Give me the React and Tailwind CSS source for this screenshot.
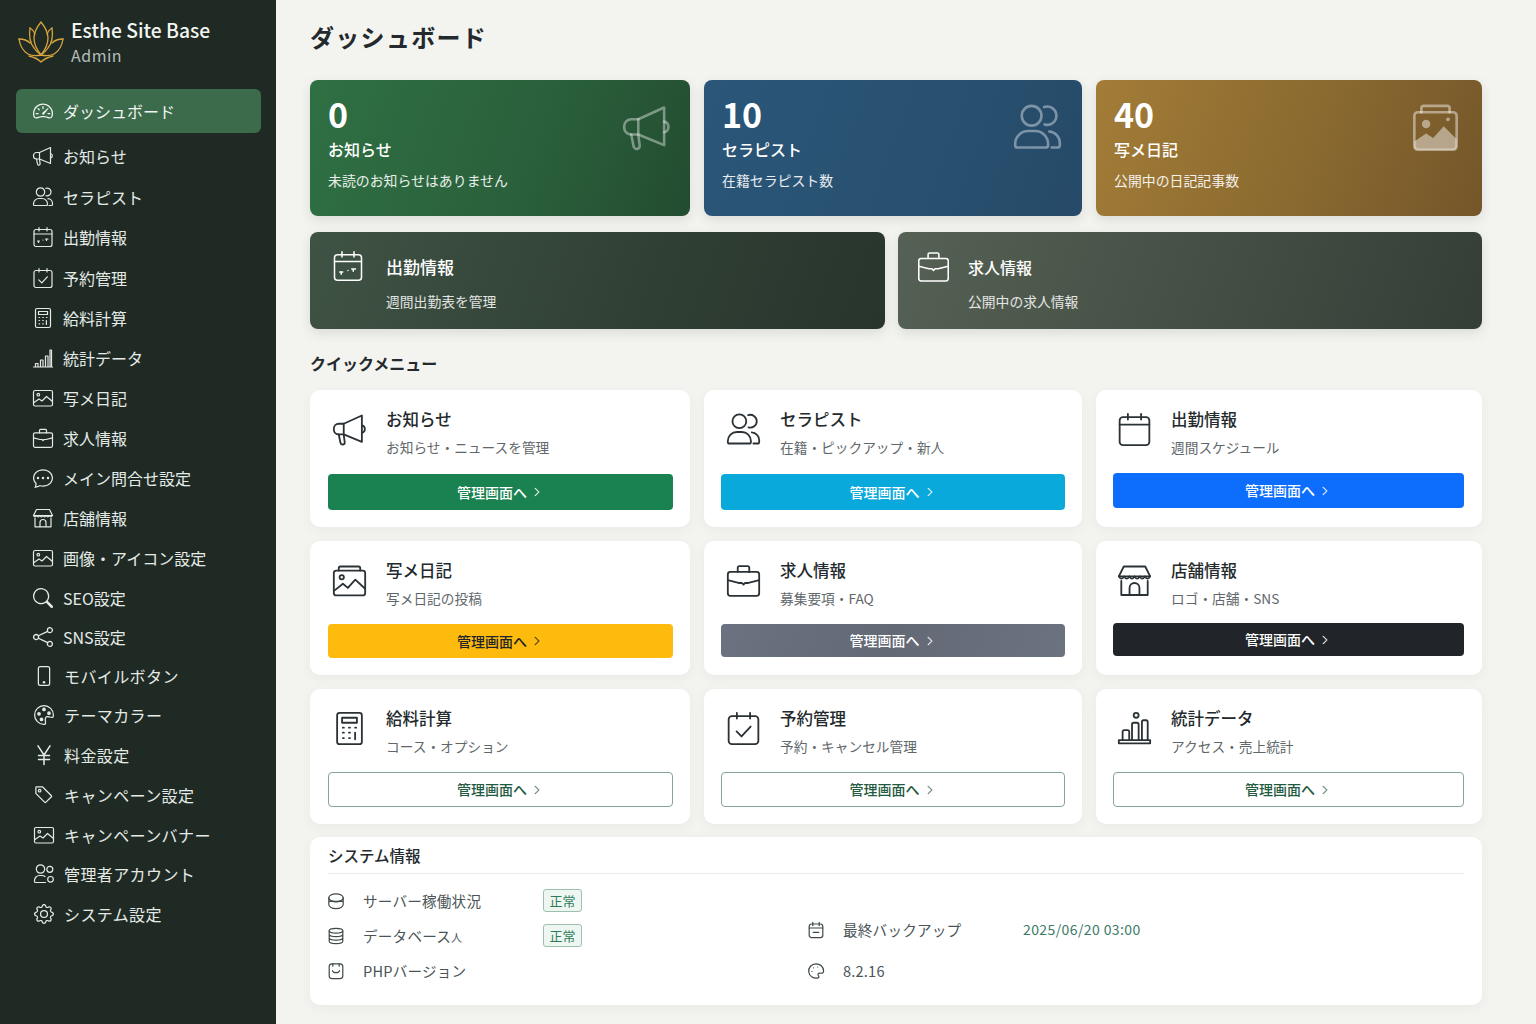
import React from "react";
import {
  BsSpeedometer2, BsChatDots, BsSearch, BsShare, BsPhone, BsPalette, BsTag, BsGear, BsChevronRight,
} from "react-icons/bs";

function S({ size = 20, sw = 1.2, children }) {
  return (
    <svg width={size} height={size} viewBox="2 2 20 20" fill="none" stroke="currentColor" strokeWidth={sw} strokeLinecap="round" strokeLinejoin="round" className="shrink-0 overflow-visible">
      {children}
    </svg>
  );
}

const Megaphone = (p) => (
  <S {...p}>
    <path d="M19.500 3.500 8.500 8.500H5.500A3 3 0 0 0 2.500 11.500v.5a3 3 0 0 0 3 3h3L19.500 19.500z" />
    <path d="M8.500 8.500V15M5.500 15l1 5a1.300 1.300 0 0 0 2.600-.4L8.500 15.200M19.500 9.500a2.300 2.300 0 0 1 0 4.500" />
  </S>
);
const People = (p) => (
  <S {...p}>
    <circle cx="9.500" cy="7" r="4.200" />
    <path d="M14.800 3.300a3.900 3.900 0 1 1 .2 7.400" />
    <path d="M2.500 19.500V19a5.500 5.500 0 0 1 5.500-5.500h3A5.500 5.500 0 0 1 16.500 19v.5a1 1 0 0 1-1 1h-12a1 1 0 0 1-1-1z" />
    <path d="M17 13.700a4.800 4.800 0 0 1 4.500 4.800v1a1 1 0 0 1-1 1h-2.500" />
  </S>
);
const Calendar = (p) => (
  <S {...p}>
    <rect x="3" y="4.500" width="18" height="17" rx="2" />
    <path d="M8 2.500v3.500M16 2.500v3.500M3 9h18" />
  </S>
);
const CalendarWeek = (p) => (
  <S {...p}>
    <rect x="3" y="4.500" width="18" height="17" rx="2" />
    <path d="M8 2.500v3.500M16 2.500v3.500M3 9h18M6.500 16h2M7.500 16v1.500M12 15h.01M14.500 14h2.500M15.500 14v1.500" />
  </S>
);
const CalendarCheck = (p) => (
  <S {...p}>
    <rect x="3" y="4.500" width="18" height="17" rx="2" />
    <path d="M8 2.500v3.500M16 2.500v3.500M7.800 13.800l3 3 5.500-6" />
  </S>
);
const Calculator = (p) => (
  <S {...p}>
    <rect x="4.500" y="2.500" width="15" height="19" rx="1.500" />
    <path d="M7.500 5.500h9v3h-9zM8 11.500h.6M11.700 11.500h.6M15.400 11.500h.6M8 14.500h.6M11.700 14.500h.6M15.400 14.500v4M8 17.800h.6M11.700 17.800h.6" />
  </S>
);
const Bars = (p) => (
  <S {...p}>
    <path d="M2.500 21h19M4.500 21v-3.500h2.500V21M9.500 21v-7h2.500v7M14.500 21V10h2.500v11M19 21V4h1.500v17" />
  </S>
);
const StatsDot = (p) => (
  <S {...p}>
    <circle cx="13" cy="4" r="1.500" />
    <path d="M4.800 19v-5a1 1 0 0 1 1-1h2a1 1 0 0 1 1 1v5M10.500 19V9.500a1 1 0 0 1 1-1h2a1 1 0 0 1 1 1V19M16.500 19V8a1 1 0 0 1 1-1h1.500a1 1 0 0 1 1 1v11" />
    <path d="M2.500 19h19v2h-19z" />
  </S>
);
const Photo = (p) => (
  <S {...p}>
    <rect x="2.500" y="4.500" width="19" height="15.500" rx="1.500" />
    <circle cx="7.300" cy="8.700" r="1.300" />
    <path d="M3 16.500l5-3.500 3 2 4.500-4.500 6 5" />
  </S>
);
const Photos = (p) => (
  <S {...p}>
    <path d="M5.500 6V4.500a1 1 0 0 1 1-1h11a1 1 0 0 1 1 1V6" />
    <rect x="2.500" y="6" width="19" height="15" rx="1.500" />
    <circle cx="7.300" cy="10" r="1.300" />
    <path d="M3 18l5-4 3 2.500 4.500-5 6 5.500" />
  </S>
);
const HeroImage = (p) => (
  <S {...p}>
    <path d="M6 5.500V3.800a1 1 0 0 1 1-1h10a1 1 0 0 1 1 1v1.700" />
    <rect x="3" y="5.500" width="18" height="16" rx="1.500" />
    <circle cx="8" cy="10.500" r="1.800" fill="currentColor" stroke="none" />
    <circle cx="17.300" cy="8.500" r=".8" fill="currentColor" stroke="none" />
    <path d="M3 18l5-3.500 3 2 4.500-5 5.500 5.500v3a1.500 1.500 0 0 1-1.500 1.500h-15A1.500 1.500 0 0 1 3 20z" fill="currentColor" stroke="none" />
  </S>
);
const Briefcase = (p) => (
  <S {...p}>
    <rect x="2.500" y="6.800" width="19" height="14.500" rx="1.500" />
    <path d="M8.500 6.800V4.300a1 1 0 0 1 1-1h5a1 1 0 0 1 1 1v2.500M2.500 11.800l6.500 1.700h2l1 1 1-1h2l6.500-1.700" />
  </S>
);
const Shop = (p) => (
  <S {...p}>
    <path d="M5.500 3.500h13l3 6H2.500z" />
    <path d="M2.500 9.500q1.600 2.800 3.200 0q1.600 2.800 3.150 0q1.600 2.800 3.150 0q1.600 2.800 3.150 0q1.600 2.800 3.150 0q1.600 2.800 3.200 0" />
    <path d="M4 12.300v8.500h16v-8.500M9 20.800v-4.300a3 3 0 0 1 6 0v4.300" />
  </S>
);
const PersonGear = (p) => (
  <S {...p}>
    <circle cx="8.500" cy="7" r="4.200" />
    <circle cx="17.800" cy="7.300" r="3" />
    <path d="M2.500 19.500v-1A5 5 0 0 1 7.500 13.500h2.500a5 5 0 0 1 3 1M2.500 19.500a1 1 0 0 0 1 1h10" />
    <circle cx="18.500" cy="17.300" r="2.800" />
  </S>
);
const Yen = (p) => (
  <S {...p} sw={1.5}>
    <path d="M6 2.800 12 12l6-9.200M12 12v9.500M6.500 12.500h11M6.500 16.500h11" />
  </S>
);
const Backup = (p) => (
  <S {...p}>
    <rect x="3.500" y="4.500" width="17" height="17" rx="3" />
    <path d="M8 2.500v4M16 2.500v4M3.500 9.500h17M8.500 15h7" />
  </S>
);
const PhpBox = (p) => (
  <S {...p}>
    <rect x="3.500" y="3" width="17" height="18.500" rx="3.500" />
    <path d="M8 3v3M16 3v3M7.500 11.500c1 3.500 8 3.500 9 0" />
  </S>
);
const DbStack = (p) => (
  <S {...p}>
    <ellipse cx="12" cy="5.500" rx="8.500" ry="3" />
    <path d="M3.500 5.500v13c0 1.700 3.800 3 8.500 3s8.500-1.300 8.500-3v-13M3.500 9.800c0 1.700 3.800 3 8.500 3s8.500-1.300 8.500-3M3.500 14.200c0 1.700 3.800 3 8.500 3s8.500-1.300 8.500-3" />
  </S>
);
const Server = (p) => (
  <S {...p}>
    <ellipse cx="12" cy="8" rx="9" ry="5" />
    <path d="M3 8v8.500c0 2.800 4 5 9 5s9-2.200 9-5V8M3 12.500h18" />
  </S>
);
const VersionIcon = (p) => (
  <S {...p}>
    <path d="M12 3a9 9 0 1 0 2.500 17.600c1.800-.5 1-2.300.3-3.300-.9-1.300.2-2.800 1.700-2.600 2.500.3 5 .3 5-2.700C21.500 6.500 17 3 12 3z" />
    <path d="M9 8h.01M14 7h.01M7 12.500h.01" />
  </S>
);

const nav = [
  [Megaphone, "お知らせ", "h-[40px] pl-[17px]"],
  [People, "セラピスト", "h-[41px] pl-[17px]"],
  [CalendarWeek, "出勤情報", "h-[40px] pl-[17px]"],
  [CalendarCheck, "予約管理", "h-[41px] pl-[17px]"],
  [Calculator, "給料計算", "h-[40px] pl-[17px]"],
  [Bars, "統計データ", "h-[40px] pl-[17px]"],
  [Photo, "写メ日記", "h-[40px] pl-[17px]"],
  [Briefcase, "求人情報", "h-[40px] pl-[17px]"],
  [BsChatDots, "メイン問合せ設定", "h-[40px] pl-[17px]"],
  [Shop, "店舗情報", "h-[40px] pl-[17px]"],
  [Photo, "画像・アイコン設定", "h-[40px] pl-[17px]"],
  [BsSearch, "SEO設定", "h-[39px] pl-[17px]"],
  [BsShare, "SNS設定", "h-[39px] pl-[17px]"],
  [BsPhone, "モバイルボタン", "h-[39px] pl-[18px] tracking-[0.4px]"],
  [BsPalette, "テーマカラー", "h-[40px] pl-[18px] tracking-[0.4px]"],
  [Yen, "料金設定", "h-[40px] pl-[18px] tracking-[0.4px]"],
  [BsTag, "キャンペーン設定", "h-[40px] pl-[18px] tracking-[0.4px]"],
  [Photo, "キャンペーンバナー", "h-[39px] pl-[18px] tracking-[0.4px]"],
  [PersonGear, "管理者アカウント", "h-[40px] pl-[18px] tracking-[0.4px]"],
  [BsGear, "システム設定", "h-[40px] pl-[18px] tracking-[0.4px]"],
];

const stats = [
  { n: "0", t: "お知らせ", s: "未読のお知らせはありません", I: Megaphone, bg: "bg-[linear-gradient(110deg,#2f7043,#2a5f3b_60%,#234c30)]", ic: "text-white/40 mr-[20px]" },
  { n: "10", t: "セラピスト", s: "在籍セラピスト数", I: People, bg: "bg-[linear-gradient(110deg,#2b5679,#28506f_60%,#264a68)]", ic: "text-white/40 mr-[21px]" },
  { n: "40", t: "写メ日記", s: "公開中の日記記事数", I: HeroImage, bg: "bg-[linear-gradient(110deg,#a37c37,#8a6a30_55%,#74562a)]", ic: "text-white/45 mr-[23px]" },
];

const green = "bg-white text-[#1f5a41] border border-[#86a596]";
const groups = [
  [
    { t: "お知らせ", s: "お知らせ・ニュースを管理", I: Megaphone, b: "bg-[#1a8150] text-white", h: "h-[84px]", bh: "h-[36px]", c: "text-white/90", pb: "pb-[17px]" },
    { t: "セラピスト", s: "在籍・ピックアップ・新人", I: People, b: "bg-[#0aa9dc] text-white", h: "h-[84px]", bh: "h-[36px]", c: "text-white/90", pb: "pb-[17px]" },
    { t: "出勤情報", s: "週間スケジュール", I: Calendar, b: "bg-[#0d6efd] text-white", h: "h-[83px]", bh: "h-[35px]", c: "text-white/90", pb: "pb-[19px]" },
  ],
  [
    { t: "写メ日記", s: "写メ日記の投稿", I: Photos, b: "bg-[#ffbb0d] text-[#212529]", h: "h-[83px]", bh: "h-[34px]", c: "text-[#212529]/80", pb: "pb-[17px]" },
    { t: "求人情報", s: "募集要項・FAQ", I: Briefcase, b: "bg-[linear-gradient(110deg,#6b7280,#636975,#6c7380)] text-white", h: "h-[83px]", bh: "h-[33px]", c: "text-white/90", pb: "pb-[18px]" },
    { t: "店舗情報", s: "ロゴ・店舗・SNS", I: Shop, b: "bg-[#212529] text-white", h: "h-[82px]", bh: "h-[33px]", c: "text-white/90", pb: "pb-[19px]" },
  ],
  [
    { t: "給料計算", s: "コース・オプション", I: Calculator, b: green, h: "h-[83px]", bh: "h-[35px]", c: "text-[#5f8071]", pb: "pb-[17px]" },
    { t: "予約管理", s: "予約・キャンセル管理", I: CalendarCheck, b: green, h: "h-[83px]", bh: "h-[35px]", c: "text-[#5f8071]", pb: "pb-[17px]" },
    { t: "統計データ", s: "アクセス・売上統計", I: StatsDot, b: green, h: "h-[83px]", bh: "h-[35px]", c: "text-[#5f8071]", pb: "pb-[17px]" },
  ],
];
const pads = ["pl-[18px] pr-[17px]", "px-[17px]", "pl-[17px] pr-[18px]"];
const iconBox = ["w-[58px] pl-[5px]", "w-[59px] pl-[6px]", "w-[58px] pl-[5px]"];

function Quick({ c, col }) {
  const I = c.I;
  return (
    <div className={`rounded-[10px] bg-white shadow-[0_3px_12px_rgba(40,50,40,0.05)] ${pads[col]} ${c.pb}`}>
      <div className={`flex items-start ${c.h} pt-[17px]`}>
        <div className={`flex shrink-0 pt-[6px] text-[#2b3236] ${iconBox[col]}`}>
          <I size={33} sw={1.1} />
        </div>
        <div className="min-w-0">
          <div className="text-[16.500px] font-medium leading-[24px] text-[#23292c]">{c.t}</div>
          <div className="mt-[6px] text-[13.700px] leading-[20px] text-[#5f676b]">{c.s}</div>
        </div>
      </div>
      <div className={`flex items-center justify-center gap-[5px] rounded-[4px] pr-[2px] text-[14px] font-medium ${c.bh} ${c.b}`}>
        <span>管理画面へ</span>
        <BsChevronRight size={10} strokeWidth={0.8} className={c.c} />
      </div>
    </div>
  );
}

function SysRow({ icon, label, children, h }) {
  return (
    <div className={`flex items-center ${h}`}>
      <div className="w-[35px] text-[#3d4a47]">{icon}</div>
      <div className="w-[180px] text-[14.600px] tracking-[0.2px] text-[#4b5557]">{label}</div>
      {children}
    </div>
  );
}

function Badge() {
  return (
    <span className="flex h-[23px] w-[39px] items-center justify-center rounded-[3px] border border-[#9cc0ae] bg-[#eef6f1] text-[13px] text-[#2f7a5a]">正常</span>
  );
}

function Lotus() {
  return (
    <svg width="46" height="42" viewBox="0 0 46 42" fill="none" stroke="#d8a53c" strokeWidth="1.3" strokeLinejoin="round" strokeLinecap="round">
      <path d="M23 1c-4 5-7 10-7 16 0 7 3 12 7 17 4-5 7-10 7-17 0-6-3-11-7-16z" />
      <path d="M12 7c-1 7 0 15 4 20 2 3 4 5 7 7M34 7c1 7 0 15-4 20-2 3-4 5-7 7" />
      <path d="M12 7c2 1 4 4 5 6M34 7c-2 1-4 4-5 6" />
      <path d="M1 18c1 7 4 12 9 15 4 2 9 2 13 1M45 18c-1 7-4 12-9 15-4 2-9 2-13 1" />
      <path d="M1 18c4 0 8 1 11 4M45 18c-4 0-8 1-11 4" />
      <path d="M11 35c4 1 8 2 12 6 4-4 8-5 12-6" />
    </svg>
  );
}

export default function App() {
  return (
    <div className="flex min-h-screen bg-[#f3f4f0] font-['Noto_Sans_CJK_JP','Noto_Sans',sans-serif]">
      <aside className="w-[276px] shrink-0 bg-[#1f2a25] pl-[16px] pr-[15px]">
        <div className="flex h-[89px] items-start pl-[2px] pt-[21px]">
          <Lotus />
          <div className="ml-[7px] -mt-[4px]">
            <div className="text-[19.300px] font-medium leading-[26px] text-[#f3f5f3]">Esthe Site Base</div>
            <div className="text-[16px] leading-[24px] tracking-[0.5px] text-[#b6bdb9]">Admin</div>
          </div>
        </div>
        <div className="flex h-[44px] items-center rounded-[6px] bg-[#3c6b4c] pb-[1px] pl-[17px] text-[16px] text-[#f1f4f2]">
          <BsSpeedometer2 size={20} className="mr-[10px] shrink-0" />
          ダッシュボード
        </div>
        <nav className="mt-[3px]">
          {nav.map(([I, label, h]) => (
            <div key={label} className={`flex items-center text-[16px] text-[#e6eae7] ${h}`}>
              <span className="mr-[10px] shrink-0"><I size={20} /></span>
              {label}
            </div>
          ))}
        </nav>
      </aside>

      <main className="flex-1 pl-[34px] pr-[54px] pb-[19px]">
        <h1 className="flex h-[80px] items-center pb-[6px] text-[24px] font-bold tracking-[1.300px] text-[#23292c]">ダッシュボード</h1>

        <div className="grid grid-cols-[380px_378px_386px] gap-[14px]">
          {stats.map((s) => {
            const I = s.I;
            return (
              <div key={s.t} className={`flex h-[136px] items-start justify-between rounded-[8px] pl-[18px] pt-[14px] text-white shadow-[0_4px_12px_rgba(40,50,40,0.12)] ${s.bg}`}>
                <div>
                  <div className="text-[34px] font-semibold leading-[40px]">{s.n}</div>
                  <div className="mt-[3px] text-[16px] font-medium leading-[24px]">{s.t}</div>
                  <div className="mt-[9px] text-[13.900px] leading-[20px] text-white/90">{s.s}</div>
                </div>
                <div className={`pt-[10px] ${s.ic}`}>
                  <I size={47} sw={1.1} />
                </div>
              </div>
            );
          })}
        </div>

        <div className="mt-[16px] grid grid-cols-[575px_584px] gap-[13px]">
          <div className="flex h-[97px] rounded-[8px] bg-[linear-gradient(110deg,#3f5344,#303f34_60%,#28342c)] pl-[23px] text-white shadow-[0_4px_12px_rgba(40,50,40,0.12)]">
            <div className="w-[53px] pt-[19px]"><CalendarWeek size={30} sw={1} /></div>
            <div className="pt-[23px]">
              <div className="text-[17px] font-medium leading-[24px]">出勤情報</div>
              <div className="mt-[12px] text-[13.800px] leading-[20px] text-white/85">週間出勤表を管理</div>
            </div>
          </div>
          <div className="flex h-[97px] rounded-[8px] bg-[linear-gradient(110deg,#566155,#424c42_60%,#343e37)] pl-[20px] text-white shadow-[0_4px_12px_rgba(40,50,40,0.12)]">
            <div className="w-[50px] pt-[19px]"><Briefcase size={31} sw={1} /></div>
            <div className="pt-[23px]">
              <div className="text-[16px] font-medium leading-[24px]">求人情報</div>
              <div className="mt-[12px] text-[13.800px] leading-[20px] text-white/85">公開中の求人情報</div>
            </div>
          </div>
        </div>

        <h2 className="mt-[21px] text-[16px] font-semibold leading-[26px] text-[#23292c]">クイックメニュー</h2>

        <div className="mt-[14px] flex flex-col gap-[14px]">
          {groups.map((row, i) => (
            <div key={i} className="grid grid-cols-[380px_378px_386px] gap-[14px]">
              {row.map((c, col) => <Quick key={c.t} c={c} col={col} />)}
            </div>
          ))}
        </div>

        <section className="mt-[13px] rounded-[10px] bg-white px-[18px] shadow-[0_3px_12px_rgba(40,50,40,0.05)]">
          <div className="flex h-[37px] items-center border-b border-[#e9ebe8] pt-[1px] text-[15.500px] font-medium text-[#23292c]">システム情報</div>
          <div className="flex pb-[14px] pt-[9px]">
            <div className="w-[480px]">
              <SysRow icon={<Server size={16} sw={1.5} />} label="サーバー稼働状況" h="h-[35px]"><Badge /></SysRow>
              <SysRow icon={<DbStack size={16} sw={1.5} />} label={<>データベース<span className="text-[11px]">人</span></>} h="h-[35px]"><Badge /></SysRow>
              <SysRow icon={<PhpBox size={16} sw={1.5} />} label="PHPバージョン" h="h-[35px]" />
            </div>
            <div className="pt-[26px]">
              <SysRow icon={<Backup size={16} sw={1.5} />} label="最終バックアップ" h="h-[41px]">
                <span className="text-[14px] tracking-[0.4px] text-[#3c7a68]">2025/06/20 03:00</span>
              </SysRow>
              <SysRow icon={<VersionIcon size={16} sw={1.5} />} label="8.2.16" h="h-[41px]" />
            </div>
          </div>
        </section>
      </main>
    </div>
  );
}
